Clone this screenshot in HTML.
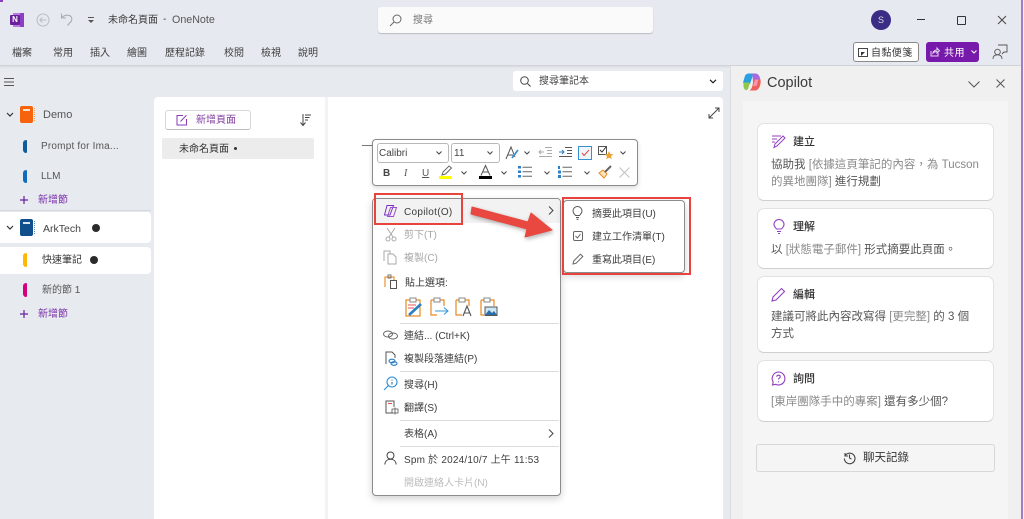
<!DOCTYPE html>
<html lang="zh-Hant"><head><meta charset="utf-8"><title>OneNote</title>
<style>
html,body{margin:0;padding:0}
body{width:1024px;height:519px;overflow:hidden;position:relative;background:#e7ebf0;font-family:"Liberation Sans","Noto Sans CJK TC",sans-serif;color:#333}
div,span.t{position:absolute}
.t{position:absolute;white-space:nowrap;font-size:10px;line-height:14px;color:#3c3c3c}
.g{color:#a8a8a8}
.p{color:#7a2ea8}
svg{position:absolute;overflow:visible}
.card{left:757px;width:235px;background:#fff;border:1px solid #e2e2e2;border-bottom:1.5px solid #d0d0d0;border-radius:7px}
.c{font-size:11.5px;color:#555;line-height:16px}
.c i{font-style:normal;color:#8a8a8a}
.hd{font-size:11px;color:#333;font-weight:500}
.sep{height:1px;background:#dcdcdc;left:400px;width:159px}
</style></head><body>

<!-- top bar -->
<div style="left:0;top:0;width:1024px;height:65px;background:#e6eaf0;border-bottom:1px solid #d0d3d8;box-shadow:0 1px 2px rgba(0,0,0,.08)"></div>
<div style="left:0;top:0;width:3px;height:2px;background:#8a3fc0"></div>
<!-- OneNote logo -->
<div style="left:13px;top:13px;width:11px;height:14px;background:#b878e0"></div>
<div style="left:20px;top:13px;width:4px;height:14px;background:#8c3fc0"></div>
<div style="left:10px;top:15px;width:10px;height:10px;background:#6a1f9c;border-radius:1px;color:#fff;font:bold 8px/10px 'Liberation Sans';text-align:center">N</div>
<svg style="left:36px;top:13px" width="14" height="14" viewBox="0 0 14 14" fill="none" stroke="#b9bdc3" stroke-width="1"><circle cx="7" cy="7" r="6"/><path d="M10.5 7H3.8M6.3 4.5 3.8 7l2.5 2.5"/></svg>
<svg style="left:60px;top:12px" width="14" height="15" viewBox="0 0 14 15" fill="none" stroke="#a9adb3" stroke-width="1.1"><path d="M1.5 1.5V6H6M1.5 6C3.5 3.5 6 3 8.5 3.3c3 .5 4 3.3 3 5.6L7.5 13.5"/></svg>
<svg style="left:87px;top:16px" width="8" height="8" viewBox="0 0 8 8" fill="#555"><rect x="1" y="1" width="6" height="1"/><path d="M1 4h6L4 7z"/></svg>
<span class="t" style="left:108px;top:14px">未命名頁面</span>
<span class="t" style="left:163px;top:13px">-</span>
<span class="t" style="left:172px;top:13px;font-size:10.7px;color:#555">OneNote</span>

<!-- search -->
<div style="left:378px;top:7px;width:275px;height:26px;background:#fafafa;border-radius:3px;box-shadow:0 1px 1px rgba(0,0,0,.2)"></div>
<svg style="left:389px;top:14px" width="13" height="13" viewBox="0 0 13 13" fill="none" stroke="#666" stroke-width="1"><circle cx="8" cy="5" r="4"/><path d="M5 8 1 12"/></svg>
<span class="t" style="left:413px;top:14px;color:#777">搜尋</span>

<!-- window controls -->
<div style="left:871px;top:10px;width:20px;height:20px;border-radius:50%;background:#3b2c86;color:#ddd;font-size:9px;line-height:20px;text-align:center">S</div>
<div style="left:917px;top:19px;width:8px;height:1px;background:#333"></div>
<div style="left:957px;top:16px;width:7px;height:7px;border:1px solid #333;border-radius:1px"></div>
<svg style="left:997px;top:15px" width="10" height="10" viewBox="0 0 10 10" stroke="#444" stroke-width="1"><path d="M1 1l8 8M9 1 1 9"/></svg>

<!-- ribbon -->
<span class="t" style="left:12px;top:47px">檔案</span>
<span class="t" style="left:53px;top:47px">常用</span>
<span class="t" style="left:90px;top:47px">插入</span>
<span class="t" style="left:127px;top:47px">繪圖</span>
<span class="t" style="left:165px;top:47px">歷程記錄</span>
<span class="t" style="left:224px;top:47px">校閱</span>
<span class="t" style="left:261px;top:47px">檢視</span>
<span class="t" style="left:298px;top:47px">說明</span>

<div style="left:853px;top:42px;width:64px;height:18px;background:#fff;border:1px solid #8a8a8a;border-radius:3px"></div>
<svg style="left:858px;top:48px" width="10" height="9" viewBox="0 0 10 9"><rect x=".5" y=".5" width="9" height="8" fill="none" stroke="#444"/><path d="M3 8V4h4L3 8z" fill="#333"/></svg>
<span class="t" style="left:871px;top:47px;letter-spacing:.4px">自黏便箋</span>
<div style="left:926px;top:42px;width:53px;height:20px;background:#7719aa;border-radius:3px"></div>
<svg style="left:930px;top:47px" width="10" height="10" viewBox="0 0 10 10" fill="none" stroke="#e8d8f2" stroke-width="1"><path d="M1 4v5h7V6M3 6c.5-2 2-3 4-3V1l2.500 2.800L7 6V4.500C5 4.500 4 5 3 6z"/></svg>
<span class="t" style="left:944px;top:47px;color:#fff;letter-spacing:.5px">共用</span>
<svg style="left:971px;top:50px" width="6" height="4" viewBox="0 0 6 4" fill="none" stroke="#fff"><path d="M.5.5 3 3 5.500.5"/></svg>
<svg style="left:992px;top:44px" width="16" height="16" viewBox="0 0 16 16" fill="none" stroke="#555" stroke-width=".9"><path d="M6 1h9v7h-3l-2 2"/><circle cx="5.500" cy="8" r="2.800"/><path d="M1 15c0-3 2-4.200 4.500-4.200S10 12 10 15"/></svg>

<!-- hamburger -->
<svg style="left:4px;top:78px" width="10" height="8" viewBox="0 0 10 8" stroke="#555"><path d="M0 .5h10M0 4h10M0 7.500h10"/></svg>

<!-- sidebar -->
<svg style="left:6px;top:112px" width="8" height="6" viewBox="0 0 8 6" fill="none" stroke="#333" stroke-width="1.200"><path d="M1 1l3 3 3-3"/></svg>
<div style="left:20px;top:106px;width:13px;height:17px;background:#f7630c;border-radius:2px"></div>
<div style="left:23px;top:109px;width:7px;height:2px;background:#fff;opacity:.8"></div>
<div style="left:33px;top:108px;width:1px;height:13px;border-right:1.500px dotted #f7a060"></div>
<span class="t" style="left:43px;top:108px;font-size:11px;color:#555">Demo</span>
<div style="left:23px;top:140px;width:4px;height:13px;background:#0f5c9c;border-radius:3px 1px 1px 3px"></div>
<span class="t" style="left:41px;top:140px;color:#555;letter-spacing:.2px">Prompt for Ima...</span>
<div style="left:23px;top:170px;width:4px;height:13px;background:#0f6cbd;border-radius:3px 1px 1px 3px"></div>
<span class="t" style="left:41px;top:170px;color:#555">LLM</span>
<svg style="left:20px;top:196px" width="8" height="8" viewBox="0 0 8 8" stroke="#6a1f9c" stroke-width="1.200"><path d="M4 0v8M0 4h8"/></svg>
<span class="t p" style="left:38px;top:194px">新增節</span>
<div style="left:0;top:210px;width:151px;height:1px;background:#d4d7dc"></div>

<div style="left:0;top:212px;width:151px;height:31px;background:#fff;border-radius:0 4px 4px 0"></div>
<svg style="left:6px;top:225px" width="8" height="6" viewBox="0 0 8 6" fill="none" stroke="#333" stroke-width="1.200"><path d="M1 1l3 3 3-3"/></svg>
<div style="left:20px;top:219px;width:13px;height:17px;background:#0f4f8b;border-radius:2px"></div>
<div style="left:23px;top:222px;width:7px;height:2px;background:#fff;opacity:.85"></div>
<div style="left:33px;top:221px;width:1px;height:13px;border-right:1.500px dotted #5f92c0"></div>
<span class="t" style="left:43px;top:222px;font-size:10.5px;color:#444">ArkTech</span>
<div style="left:92px;top:224px;width:8px;height:8px;border-radius:50%;background:#2a2a2a"></div>

<div style="left:0;top:247px;width:151px;height:27px;background:#fff;border-radius:0 4px 4px 0"></div>
<div style="left:23px;top:253px;width:4px;height:14px;background:#ffb900;border-radius:3px 1px 1px 3px"></div>
<span class="t" style="left:42px;top:254px;color:#333">快速筆記</span>
<div style="left:90px;top:256px;width:8px;height:8px;border-radius:50%;background:#2a2a2a"></div>
<div style="left:23px;top:283px;width:4px;height:14px;background:#d6007f;border-radius:3px 1px 1px 3px"></div>
<span class="t" style="left:42px;top:284px;color:#555">新的節 1</span>
<svg style="left:20px;top:310px" width="8" height="8" viewBox="0 0 8 8" stroke="#6a1f9c" stroke-width="1.200"><path d="M4 0v8M0 4h8"/></svg>
<span class="t p" style="left:38px;top:308px">新增節</span>

<!-- page list -->
<div style="left:154px;top:97px;width:171px;height:422px;background:#fff;border-radius:4px 0 0 0"></div>
<div style="left:325px;top:97px;width:3px;height:422px;background:#f3f3f3"></div>
<div style="left:328px;top:97px;width:395px;height:422px;background:#fff;border-radius:0 4px 0 0"></div>
<div style="left:165px;top:110px;width:84px;height:18px;background:#fff;border:1px solid #d6d6d6;border-bottom-color:#bbb;border-radius:3px"></div>
<svg style="left:176px;top:114px" width="12" height="12" viewBox="0 0 12 12" fill="none" stroke="#8a3ab9" stroke-width="1"><path d="M7 1.500H1v9.500h9.500V5M4.500 7.500 10.500 1.200"/></svg>
<span class="t p" style="left:196px;top:114px;color:#84409f">新增頁面</span>
<svg style="left:299px;top:113px" width="13" height="14" viewBox="0 0 13 14" fill="none" stroke="#444" stroke-width="1"><path d="M4 1v11M1.500 9.500 4 12.500l2.500-3M6 2h6M6 4.500h4.500M6 7h3"/></svg>
<div style="left:162px;top:138px;width:152px;height:21px;background:#ececec;border-radius:2px"></div>
<span class="t" style="left:179px;top:143px;color:#333">未命名頁面</span>
<div style="left:234px;top:147px;width:3px;height:3px;border-radius:50%;background:#333"></div>

<!-- notebook search -->
<div style="left:513px;top:71px;width:210px;height:20px;background:#fff;border-radius:3px"></div>
<svg style="left:520px;top:76px" width="11" height="11" viewBox="0 0 11 11" fill="none" stroke="#444"><circle cx="4.500" cy="4.500" r="3.800"/><path d="M7.500 7.500 10.500 10.500"/></svg>
<span class="t" style="left:539px;top:75px;color:#444">搜尋筆記本</span>
<svg style="left:709px;top:79px" width="8" height="5" viewBox="0 0 8 5" fill="none" stroke="#222" stroke-width="1.200"><path d="M1 .8 4 3.800 7 .8"/></svg>
<svg style="left:708px;top:107px" width="12" height="12" viewBox="0 0 12 12" fill="none" stroke="#444"><path d="M1 11 11 1M7 1h4v4M1 7v4h4"/></svg>
<div style="left:362px;top:145px;width:12px;height:1px;background:#777"></div>

<!-- mini toolbar -->
<div style="left:372px;top:139px;width:264px;height:45px;background:#fff;border:1px solid #8c8c8c;border-radius:4px;box-shadow:0 2px 5px rgba(0,0,0,.15)"></div>
<div style="left:377px;top:143px;width:70px;height:18px;border:1px solid #b8b8b8;border-radius:3px"></div>
<span class="t" style="left:379px;top:147px;color:#444">Calibri</span>
<svg style="left:436px;top:151px" width="6" height="4" viewBox="0 0 6 4" fill="none" stroke="#444"><path d="M.5.5 3 3 5.500.5"/></svg>
<div style="left:451px;top:143px;width:47px;height:18px;border:1px solid #b8b8b8;border-radius:3px"></div>
<span class="t" style="left:454px;top:147px;color:#444">11</span>
<svg style="left:487px;top:151px" width="6" height="4" viewBox="0 0 6 4" fill="none" stroke="#444"><path d="M.5.5 3 3 5.500.5"/></svg>
<svg style="left:505px;top:146px" width="15" height="14" viewBox="0 0 15 14" fill="none" stroke="#555"><path d="M1 13 6 1l4 10M3 9h5"/><path d="M7 12l6-8" stroke="#3a8fd0" stroke-width="1.800"/></svg>
<svg style="left:524px;top:151px" width="6" height="4" viewBox="0 0 6 4" fill="none" stroke="#444"><path d="M.5.500 3 3 5.500.500"/></svg>
<svg style="left:539px;top:146px" width="13" height="12" viewBox="0 0 13 12" fill="none" stroke="#aaa"><path d="M6 1.500h7M8 4.500h5M8 7.500h5M0 10.500h13M5 6H0M2 4 0 6l2 2"/></svg>
<svg style="left:559px;top:146px" width="13" height="12" viewBox="0 0 13 12" fill="none" stroke="#555"><path d="M6 1.500h7M8 4.500h5M8 7.500h5M0 10.500h13"/><path d="M0 6h5M3 4l2 2-2 2" stroke="#2a7fc8"/></svg>
<div style="left:578px;top:146px;width:12px;height:12px;border:1px solid #3a8fd0;background:#eef6fc"></div>
<svg style="left:581px;top:149px" width="9" height="8" viewBox="0 0 9 8" fill="none" stroke="#e25050" stroke-width="1.100"><path d="M1 4l2 2.500L8 1"/></svg>
<svg style="left:598px;top:146px" width="16" height="15" viewBox="0 0 16 15"><rect x=".5" y=".5" width="8" height="8" fill="none" stroke="#555"/><path d="M2 4l2 2 4-5" fill="none" stroke="#333"/><path d="M11 5l1.300 3 3 .2-2.300 2 .8 3-2.800-1.600L8.200 13.200l.8-3-2.300-2 3-.2z" fill="#f0a030"/></svg>
<svg style="left:620px;top:151px" width="6" height="4" viewBox="0 0 6 4" fill="none" stroke="#444"><path d="M.5.500 3 3 5.500.500"/></svg>

<span class="t" style="left:383px;top:167px;font-weight:bold;color:#444">B</span>
<span class="t" style="left:404px;top:167px;font-style:italic;color:#555;font-family:'Liberation Serif'">I</span>
<span class="t" style="left:422px;top:167px;color:#555;text-decoration:underline">U</span>
<svg style="left:440px;top:165px" width="13" height="11" viewBox="0 0 13 11" fill="none" stroke="#666"><path d="M2 10 3 7l6-6 2.500 2-6 6z"/></svg>
<div style="left:439px;top:176px;width:13px;height:3px;background:#ffff00"></div>
<svg style="left:461px;top:171px" width="6" height="4" viewBox="0 0 6 4" fill="none" stroke="#444"><path d="M.5.500 3 3 5.500.500"/></svg>
<svg style="left:480px;top:165px" width="11" height="11" viewBox="0 0 11 11" fill="none" stroke="#555"><path d="M1 10.500 5.500.5 10 10.500M3 7h5"/></svg>
<div style="left:479px;top:176px;width:13px;height:3px;background:#000"></div>
<svg style="left:501px;top:171px" width="6" height="4" viewBox="0 0 6 4" fill="none" stroke="#444"><path d="M.5.500 3 3 5.500.500"/></svg>
<svg style="left:518px;top:166px" width="14" height="12" viewBox="0 0 14 12"><g fill="#2a7fc8"><rect x="0" y="0" width="3" height="2.500"/><rect x="0" y="4.500" width="3" height="2.500"/><rect x="0" y="9" width="3" height="2.500"/></g><path d="M4.500 1.200H14M4.500 5.700H14M4.500 10.200H14" stroke="#666"/></svg>
<svg style="left:544px;top:171px" width="6" height="4" viewBox="0 0 6 4" fill="none" stroke="#444"><path d="M.5.500 3 3 5.500.500"/></svg>
<svg style="left:558px;top:166px" width="14" height="12" viewBox="0 0 14 12"><g fill="#2a7fc8"><rect x="0" y="0" width="2" height="3"/><rect x="0" y="4.500" width="3" height="3"/><rect x="0" y="9" width="3" height="3"/></g><path d="M4.500 1.200H14M4.500 5.700H14M4.500 10.200H14" stroke="#666"/></svg>
<svg style="left:584px;top:171px" width="6" height="4" viewBox="0 0 6 4" fill="none" stroke="#444"><path d="M.5.500 3 3 5.500.500"/></svg>
<svg style="left:598px;top:165px" width="14" height="14" viewBox="0 0 14 14" fill="none"><path d="M1 8l5 5 3-4-4-4z" fill="#fbe3c0" stroke="#e88a20"/><path d="M7 7l6-6" stroke="#666" stroke-width="2"/></svg>
<svg style="left:619px;top:167px" width="11" height="11" viewBox="0 0 11 11" stroke="#c4c4c4" stroke-width="1.100"><path d="M.5.500l10 10M10.500.500l-10 10"/></svg>

<!-- context menu -->
<div style="left:372px;top:198px;width:187px;height:296px;background:#fff;border:1px solid #8c8c8c;border-radius:4px;box-shadow:0 3px 8px rgba(0,0,0,.18)"></div>
<div style="left:373px;top:199px;width:187px;height:24px;background:#f2f2f2;border-radius:3px 3px 0 0"></div>
<svg style="left:383px;top:204px" width="15" height="14" viewBox="0 0 15 14" fill="none" stroke="#7a30c0" stroke-width="1"><path d="M4 1.500h6.500L7 11H1.500z"/><path d="M7.500 3.500h6L10.500 12.500H4.500z" stroke="#9a4fd0"/></svg>
<span class="t" style="left:404px;top:206px;letter-spacing:.3px">Copilot(O)</span>
<svg style="left:548px;top:206px" width="6" height="9" viewBox="0 0 6 9" fill="none" stroke="#444"><path d="M1 .5l4 4-4 4"/></svg>
<svg style="left:385px;top:227px" width="12" height="15" viewBox="0 0 12 15" fill="none" stroke="#aaa"><path d="M2 1l6 9M10 1 4 10"/><circle cx="3" cy="12" r="2"/><circle cx="9" cy="12" r="2"/></svg>
<span class="t g" style="left:404px;top:229px">剪下(T)</span>
<svg style="left:383px;top:250px" width="14" height="15" viewBox="0 0 14 15" fill="none" stroke="#aaa"><path d="M1 11V1h6v3"/><path d="M5 4h5l3 3v7H5z"/></svg>
<span class="t g" style="left:404px;top:252px">複製(C)</span>
<svg style="left:384px;top:274px" width="14" height="15" viewBox="0 0 14 15" fill="none"><path d="M1 13V3h9v3" stroke="#e68a20" stroke-width="1.100"/><rect x="4" y="1" width="3" height="3" stroke="#777"/><rect x="6.500" y="6.500" width="6" height="8" stroke="#555" fill="#fff"/></svg>
<span class="t" style="left:405px;top:277px;color:#333">貼上選項:</span>
<!-- paste icons -->
<svg style="left:405px;top:297px" width="19" height="20" viewBox="0 0 19 20" fill="none"><rect x="1" y="3" width="14" height="16" stroke="#e68a20" stroke-width="1.200"/><rect x="5" y="1" width="6" height="4" stroke="#888" fill="#fff"/><path d="M3 8h8" stroke="#e25050"/><path d="M3 11h6" stroke="#e25050"/><path d="M4 18 16 7" stroke="#2a7fc8" stroke-width="2.600"/></svg>
<svg style="left:430px;top:297px" width="19" height="20" viewBox="0 0 19 20" fill="none"><path d="M1 3h13v6M1 3v15h6" stroke="#e68a20" stroke-width="1.200"/><rect x="4" y="1" width="6" height="4" stroke="#888" fill="#fff"/><path d="M5 14h13M14 10.500l4 3.500-4 3.500" stroke="#3a9ad9" stroke-width="1.100"/></svg>
<svg style="left:455px;top:297px" width="19" height="20" viewBox="0 0 19 20" fill="none"><path d="M1 3h13v6M1 3v15h6" stroke="#e68a20" stroke-width="1.200"/><rect x="4" y="1" width="6" height="4" stroke="#888" fill="#fff"/><path d="M8 19 12 9l4 10M9.500 16h5" stroke="#555" stroke-width="1.100"/></svg>
<svg style="left:480px;top:297px" width="19" height="20" viewBox="0 0 19 20" fill="none"><path d="M1 3h13v6M1 3v15h3" stroke="#e68a20" stroke-width="1.200"/><rect x="4" y="1" width="6" height="4" stroke="#888" fill="#fff"/><rect x="5" y="10" width="12" height="8.500" stroke="#555" fill="#cfe6f7"/><path d="M5 18 9 13l3 3 2-2 3 4z" fill="#2a6fa8"/></svg>
<div class="sep" style="top:323px"></div>
<svg style="left:383px;top:330px" width="15" height="10" viewBox="0 0 15 10" fill="none" stroke="#666"><ellipse cx="5" cy="4" rx="4.500" ry="3"/><ellipse cx="10" cy="6" rx="4.500" ry="3"/></svg>
<span class="t" style="left:404px;top:330px">連結... (Ctrl+K)</span>
<svg style="left:385px;top:351px" width="13" height="15" viewBox="0 0 13 15" fill="none"><path d="M1 13V1h6l3 3v3" stroke="#555"/><ellipse cx="7" cy="10" rx="3" ry="1.800" stroke="#2a7fc8" stroke-width="1.100"/><ellipse cx="9" cy="12.500" rx="3" ry="1.800" stroke="#2a7fc8" stroke-width="1.100"/></svg>
<span class="t" style="left:404px;top:353px">複製段落連結(P)</span>
<div class="sep" style="top:371px"></div>
<svg style="left:383px;top:376px" width="15" height="15" viewBox="0 0 15 15" fill="none" stroke="#2a8fd8" stroke-width="1.100"><circle cx="9" cy="6" r="5"/><path d="M5.500 9.500 1 14"/><path d="M9 3.500v1M9 6v2.500" stroke="#2a6fa8"/></svg>
<span class="t" style="left:404px;top:379px">搜尋(H)</span>
<svg style="left:385px;top:400px" width="14" height="15" viewBox="0 0 14 15" fill="none"><path d="M8 13H1V1h8v6" stroke="#555"/><path d="M3 3.500h4" stroke="#e25050" stroke-width="1.100"/><path d="M7 9h6v4H7zM10 7.500v7" stroke="#555" stroke-width=".8"/></svg>
<span class="t" style="left:404px;top:402px">翻譯(S)</span>
<div class="sep" style="top:420px"></div>
<span class="t" style="left:404px;top:428px">表格(A)</span>
<svg style="left:548px;top:429px" width="6" height="9" viewBox="0 0 6 9" fill="none" stroke="#444"><path d="M1 .5l4 4-4 4"/></svg>
<div class="sep" style="top:446px"></div>
<svg style="left:384px;top:451px" width="13" height="14" viewBox="0 0 13 14" fill="none" stroke="#444" stroke-width="1"><circle cx="6.500" cy="4.500" r="3.500"/><path d="M.8 13.500c.3-3.500 2.700-5.200 5.700-5.200s5.400 1.700 5.700 5.200"/></svg>
<span class="t" style="left:404px;top:454px;letter-spacing:.2px">Spm 於 2024/10/7 上午 11:53</span>
<span class="t" style="left:404px;top:477px;color:#bcbcbc">開啟連絡人卡片(N)</span>

<!-- submenu -->
<div style="left:563px;top:200px;width:120px;height:71px;background:#fff;border:1px solid #8c8c8c;border-radius:4px;box-shadow:0 3px 8px rgba(0,0,0,.18)"></div>
<svg style="left:572px;top:206px" width="11" height="14" viewBox="0 0 11 14" fill="none" stroke="#555"><path d="M3.500 9.500C2.500 8 1 7.200 1 5a4.500 4.500 0 0 1 9 0c0 2.200-1.500 3-2.500 4.500zM4 11.500h3M4.500 13.300h2"/></svg>
<span class="t" style="left:592px;top:208px">摘要此項目(U)</span>
<svg style="left:573px;top:231px" width="10" height="10" viewBox="0 0 10 10" fill="none" stroke="#666"><rect x=".5" y=".5" width="9" height="9" rx="1.500"/><path d="M2.500 5l2 2 3-4"/></svg>
<span class="t" style="left:592px;top:231px">建立工作清單(T)</span>
<svg style="left:572px;top:253px" width="12" height="12" viewBox="0 0 12 12" fill="none" stroke="#666"><path d="M1 11l.7-3L8.500 1.200l2.300 2.300L4 10.300z"/></svg>
<span class="t" style="left:592px;top:254px">重寫此項目(E)</span>

<!-- red annotations -->
<div style="left:374px;top:193px;width:85px;height:28px;border:2px solid #e8443e;box-sizing:content-box"></div>
<div style="left:562px;top:197px;width:125px;height:74px;border:2.500px solid #e8443e;box-sizing:content-box"></div>
<svg style="left:468px;top:204px;filter:drop-shadow(1px 2px 2px rgba(0,0,0,.3))" width="90" height="36" viewBox="0 0 90 36"><path d="M4 3 60 18 63 9 84 26 57 33 59 25 3 10Z" fill="#e8483f" stroke="#e8483f" stroke-linejoin="round"/></svg>

<!-- copilot pane -->
<div style="left:731px;top:66px;width:290px;height:453px;background:#f0f0f0"></div>
<div style="left:730px;top:66px;width:1px;height:453px;background:#dcdde0"></div>
<div style="left:743px;top:101px;width:265px;height:418px;background:#f5f5f5"></div>
<div style="left:1021px;top:0;width:2px;height:519px;background:#a37cc4"></div>
<div style="left:1023px;top:0;width:1px;height:519px;background:#f0f0f0"></div>
<svg style="left:743px;top:73px" width="18" height="18" viewBox="0 0 18 18"><path d="M6 .5h4.500L7 11H1.500C.5 11 0 10 .3 8.500L1.800 3.500C2.300 1.500 4 .5 6 .5z" fill="#2a9fe0"/><path d="M.8 9.500H7L5.500 14.500c-.3 1.500-1.500 3-3 2.500C.5 16 0 12 .8 9.500z" fill="#8fc84a"/><path d="M9.500.5H12c2.500 0 4 1.200 5 4.500.5 2 .7 3.500.3 5H10z" fill="#a868e0"/><path d="M10.500 6.500H17.500c.8 4-1 10.500-5 11H6.500c1.500-1 2.500-3 3-5z" fill="#f0605a"/><path d="M12 6.500H15.500L13.500 13H10z" fill="#f6a8c8" opacity=".75"/></svg>
<span class="t" style="left:767px;top:75px;font-size:14.500px;line-height:17px;color:#3a3a3a">Copilot</span>
<svg style="left:968px;top:81px" width="12" height="7" viewBox="0 0 12 7" fill="none" stroke="#555"><path d="M.5.500l5.500 5.500 5.500-5.500"/></svg>
<svg style="left:996px;top:79px" width="9" height="9" viewBox="0 0 9 9" stroke="#555"><path d="M.5.500l8 8M8.500.500l-8 8"/></svg>

<div class="card" style="top:123px;height:76px"></div>
<svg style="left:771px;top:134px" width="15" height="15" viewBox="0 0 15 15" fill="none" stroke="#9040c0" stroke-width="1"><path d="M1 2h9M1 5h5M1 8h3M3 13.500l1-3.500 8-8 2 2-8 8z"/></svg>
<span class="t hd" style="left:793px;top:135px">建立</span>
<span class="t c" style="left:771px;top:157px">協助我 <i>[依據這頁筆記的內容，為 Tucson</i></span>
<span class="t c" style="left:771px;top:174px"><i>的異地團隊]</i> 進行規劃</span>

<div class="card" style="top:208px;height:59px"></div>
<svg style="left:773px;top:219px" width="12" height="15" viewBox="0 0 12 15" fill="none" stroke="#9040c0" stroke-width="1.100"><path d="M3.500 10C2.500 8.500 1 7.500 1 5.500a5 5 0 0 1 10 0c0 2-1.500 3-2.500 4.500zM4 12.500h4M5 14.500h2"/></svg>
<span class="t hd" style="left:793px;top:220px">理解</span>
<span class="t c" style="left:771px;top:242px">以 <i>[狀態電子郵件]</i> 形式摘要此頁面。</span>

<div class="card" style="top:276px;height:75px"></div>
<svg style="left:771px;top:287px" width="15" height="15" viewBox="0 0 15 15" fill="none" stroke="#9040c0" stroke-width="1.100"><path d="M1 14l1-4 8.500-8.500 3 3L5 13z"/></svg>
<span class="t hd" style="left:793px;top:288px">編輯</span>
<span class="t c" style="left:771px;top:309px">建議可將此內容改寫得 <i>[更完整]</i> 的 3 個</span>
<span class="t c" style="left:771px;top:326px">方式</span>

<div class="card" style="top:360px;height:60px"></div>
<svg style="left:771px;top:371px" width="15" height="15" viewBox="0 0 15 15" fill="none" stroke="#9040c0" stroke-width="1.100"><path d="M7.500 1a6.500 6.500 0 1 1-3 12.300L1.500 14l.7-3A6.500 6.500 0 0 1 7.500 1z"/><path d="M5.800 5.800c0-2.200 3.500-2.200 3.500 0 0 1.300-1.800 1.300-1.800 2.700M7.500 10.200v1"/></svg>
<span class="t hd" style="left:793px;top:372px">詢問</span>
<span class="t c" style="left:771px;top:394px"><i>[東岸團隊手中的專案]</i> 還有多少個?</span>

<div style="left:756px;top:444px;width:237px;height:26px;background:#f5f5f5;border:1px solid #d8d8d8;border-radius:3px"></div>
<svg style="left:843px;top:451px" width="13" height="13" viewBox="0 0 13 13" fill="none" stroke="#444" stroke-width="1.100"><path d="M2 2v3h3M2 5a5.300 5.300 0 1 1-.6 2.500M6.500 3.500v3.500l2 1.200"/></svg>
<span class="t" style="left:863px;top:451px;font-size:11.500px;color:#333">聊天記錄</span>
</body></html>
